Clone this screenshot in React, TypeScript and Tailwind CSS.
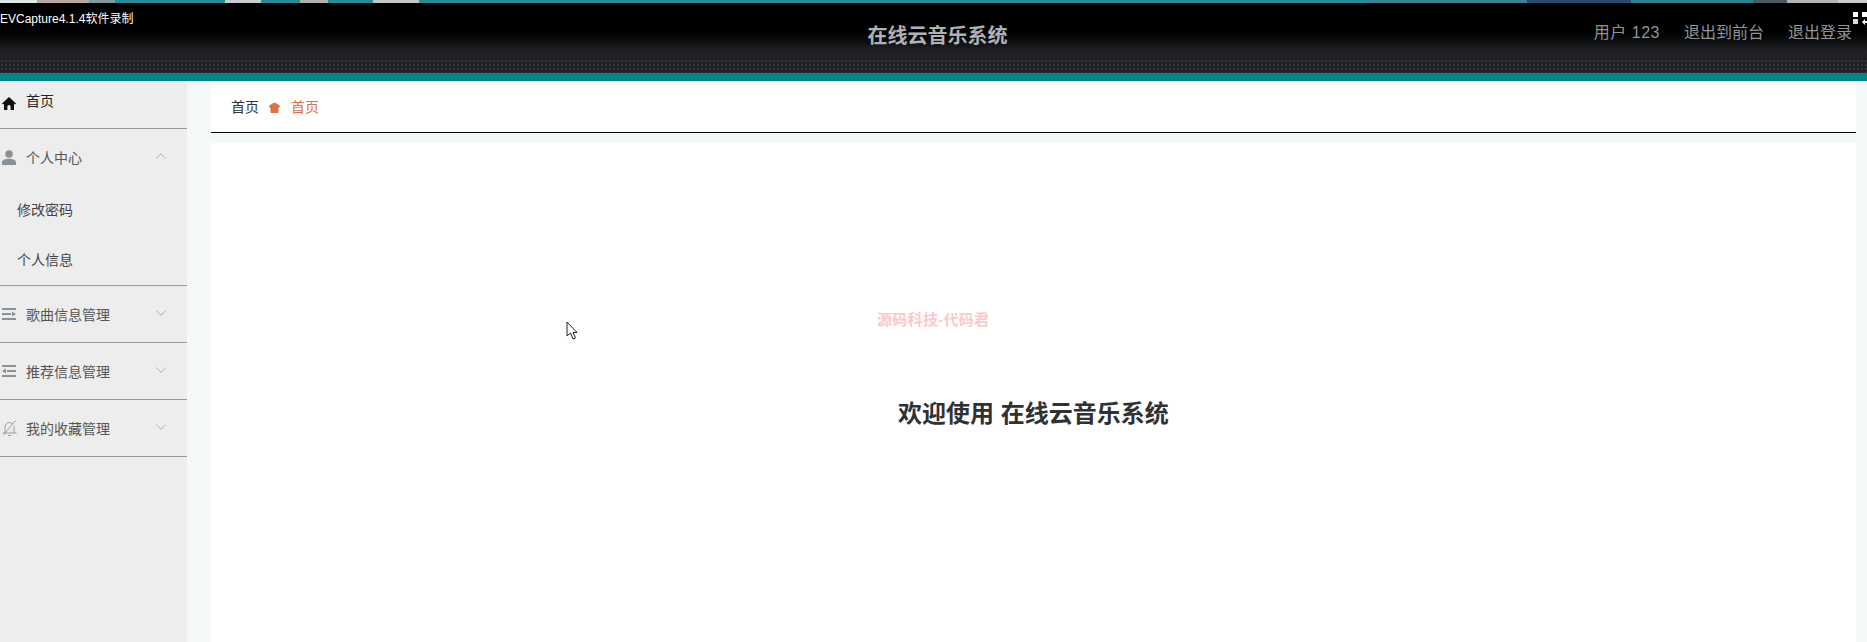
import { ChevronDown, ChevronUp } from "lucide-react";
import type { ReactNode } from "react";

const FONT = "font-['Liberation_Sans','Noto_Sans_CJK_SC',sans-serif]";

// colour runs of the strip along the top edge: [width, colour]
const STRIP: [number, string][] = [
  [37, "#dfe8e8"], [52, "#b8a8a0"], [26, "#7f9a9c"], [110, "#2a8a96"], [36, "#c8ccd0"],
  [39, "#2a8a96"], [28, "#b0aeac"], [45, "#2a8a96"], [46, "#c4c6cc"], [953, "#2a8a96"],
  [155, "#3f7f8f"], [70, "#2c4a70"], [34, "#2c4a70"], [122, "#2f8290"], [34, "#4a5a60"],
  [51, "#b4b4b4"], [29, "#cccccc"],
];

function HomeIcon() {
  return (
    <svg viewBox="0 0 14 13" className="w-[14px] h-[13px] text-[#111] translate-y-[2px]" fill="currentColor">
      <path d="M7 0 0 6.500l1 1 1-.8V13h3.400V9.500a1.600 1.600 0 0 1 3.200 0V13H12V6.700l1 .8 1-1z" />
    </svg>
  );
}

function CrumbIcon() {
  return (
    <svg viewBox="0 0 11 11" className="w-[11px] h-[11px] text-[#e0703f]" fill="currentColor">
      <path d="M3.500 1.500 5.500.5l2 1L11 3.800 10 6H9.500v4a1 1 0 0 1-1 1h-6a1 1 0 0 1-1-1V6H1L0 3.800z" />
    </svg>
  );
}

function UserIcon() {
  return (
    <svg viewBox="0 0 14 15" className="w-[14px] h-[15px] text-[#8a9299]" fill="currentColor">
      <circle cx="7" cy="4" r="3.800" />
      <path d="M0 15v-2.500C0 10 3 8.800 7 8.800s7 1.200 7 3.700V15z" />
    </svg>
  );
}

function ListRightIcon() {
  return (
    <svg viewBox="0 0 14 12" className="w-[14px] h-[12px] text-[#8a9299]" fill="currentColor">
      <path d="M0 0h14v2H0zM0 5h9v2H0zM0 10h14v2H0zM10 3.500 14 6l-4 2.500z" />
    </svg>
  );
}

function ListLeftIcon() {
  return (
    <svg viewBox="0 0 14 12" className="w-[14px] h-[12px] text-[#8a9299]" fill="currentColor">
      <path d="M0 0h14v2H0zM5 5h9v2H5zM0 10h14v2H0zM4 3.500 0 6l4 2.500z" />
    </svg>
  );
}

function MutedBellIcon() {
  return (
    <svg viewBox="0 0 15 16" className="w-[15px] h-[16px] text-[#9aa0a6]" fill="none" stroke="currentColor" strokeWidth="1">
      <path d="M3 13V7a4.500 4.500 0 0 1 7.500-3.300M12 6v7M.5 13h14M6 15.500h3M1.500 15 13.500.5" />
    </svg>
  );
}

function MenuGroup({ icon, label, open, children }: { icon: ReactNode; label: string; open?: boolean; children?: ReactNode }) {
  return (
    <div className="border-b border-[#999]">
      <div className="flex items-center h-[56px] pl-[2px] pr-[17px]">
        <span className="w-[24px] flex-none flex items-center">{icon}</span>
        <span className="text-[14px] text-[#555] translate-y-[1px]">{label}</span>
        {open ? (
          <ChevronUp className="ml-auto w-[18px] h-[18px] text-[#999] -translate-y-[1px]" strokeWidth={1} />
        ) : (
          <ChevronDown className="ml-auto w-[18px] h-[18px] text-[#999] -translate-y-[1px]" strokeWidth={1} />
        )}
      </div>
      {children}
    </div>
  );
}

export default function App() {
  return (
    <div className={`${FONT} h-[642px] w-[1867px] overflow-hidden bg-[#f5f8f9] flex flex-col`}>
      {/* header */}
      <div className="relative flex-none h-[73px] flex flex-col">
        <div className="flex-none h-[3px] flex">
          {STRIP.map(([w, c], i) => (
            <span key={i} style={{ width: w, backgroundColor: c }} />
          ))}
        </div>
        <div className="relative flex-1 bg-gradient-to-b from-[#000] from-[28%] to-[#1f2124] to-[68%] flex items-center justify-center">
          <div className="absolute inset-x-0 bottom-0 h-[14px] bg-[radial-gradient(#4a4d50_0.6px,transparent_0.8px)] bg-[length:4px_4px]" />
          <span className="relative text-[20px] font-bold text-[#aeb2b6] translate-x-[4px] -translate-y-[2px]">在线云音乐系统</span>
        </div>
        <span className="absolute left-0 top-[11px] text-[12px] leading-[16px] text-white">EVCapture4.1.4软件录制</span>
        <div className="absolute right-[15px] top-[21px] flex items-center gap-[24px] text-[16px] leading-[24px] text-[#8f9498]">
          <span className="tracking-[0.5px]">用户 123</span>
          <span>退出到前台</span>
          <span>退出登录</span>
        </div>
        <div className="absolute right-0 top-[12px] w-[14px] grid grid-cols-2 gap-x-[3px] gap-y-[2px]">
          <span className="w-[5px] h-[5px] bg-white" />
          <span className="w-[5px] h-[5px] bg-white" />
          <span className="w-[5px] h-[5px] bg-[#ddd]" />
          <svg viewBox="0 0 6 6" className="w-[6px] h-[6px] text-white" fill="currentColor">
            <path d="M0 3 3 0v2h3v2H3v2z" />
          </svg>
        </div>
      </div>
      <div className="flex-none h-[8px] bg-[#008686]" />

      <div className="flex-1 flex min-h-0">
        {/* sidebar */}
        <div className="flex-none w-[187px] bg-[#ededed]">
          <div className="flex items-center h-[48px] pl-[2px] pb-[7px] border-b border-[#999]">
            <span className="w-[24px] flex-none flex items-center">
              <HomeIcon />
            </span>
            <span className="text-[14px] text-[#222]">首页</span>
          </div>
          <MenuGroup icon={<UserIcon />} label="个人中心" open>
            <div className="pl-[17px] text-[14px] text-[#444]">
              <div className="h-[50px] leading-[50px]">修改密码</div>
              <div className="h-[50px] leading-[50px]">个人信息</div>
            </div>
          </MenuGroup>
          <MenuGroup icon={<ListRightIcon />} label="歌曲信息管理" />
          <MenuGroup icon={<ListLeftIcon />} label="推荐信息管理" />
          <MenuGroup icon={<MutedBellIcon />} label="我的收藏管理" />
        </div>

        {/* main */}
        <div className="flex-1 pl-[24px] pr-[11px] flex flex-col min-w-0">
          <div className="flex-none h-[52px] pt-[2px] bg-white border-b border-black flex items-center pl-[20px] text-[14px]">
            <span className="text-[#333]">首页</span>
            <span className="ml-[10px] mr-[11px]">
              <CrumbIcon />
            </span>
            <span className="text-[#e0703f]">首页</span>
          </div>
          <div className="relative flex-1 mt-[10px] bg-white">
            <svg viewBox="0 0 12 20" className="absolute left-[355px] top-[178px] w-[12px] h-[20px]" fill="#fff" stroke="#222" strokeWidth="1">
              <path d="M1 1v14l3.500-3 2.500 6 2.500-1-2.500-5.500H11z" />
            </svg>
            <div className="absolute left-[666px] top-[167px] text-[15px] font-bold leading-[20px] tracking-[0.3px] text-[#fbc8cb]">源码科技-代码君</div>
            <h1 className="absolute left-[687px] top-[255px] text-[24px] leading-[32px] font-bold text-[#303133]">欢迎使用 在线云音乐系统</h1>
          </div>
        </div>
      </div>
    </div>
  );
}
